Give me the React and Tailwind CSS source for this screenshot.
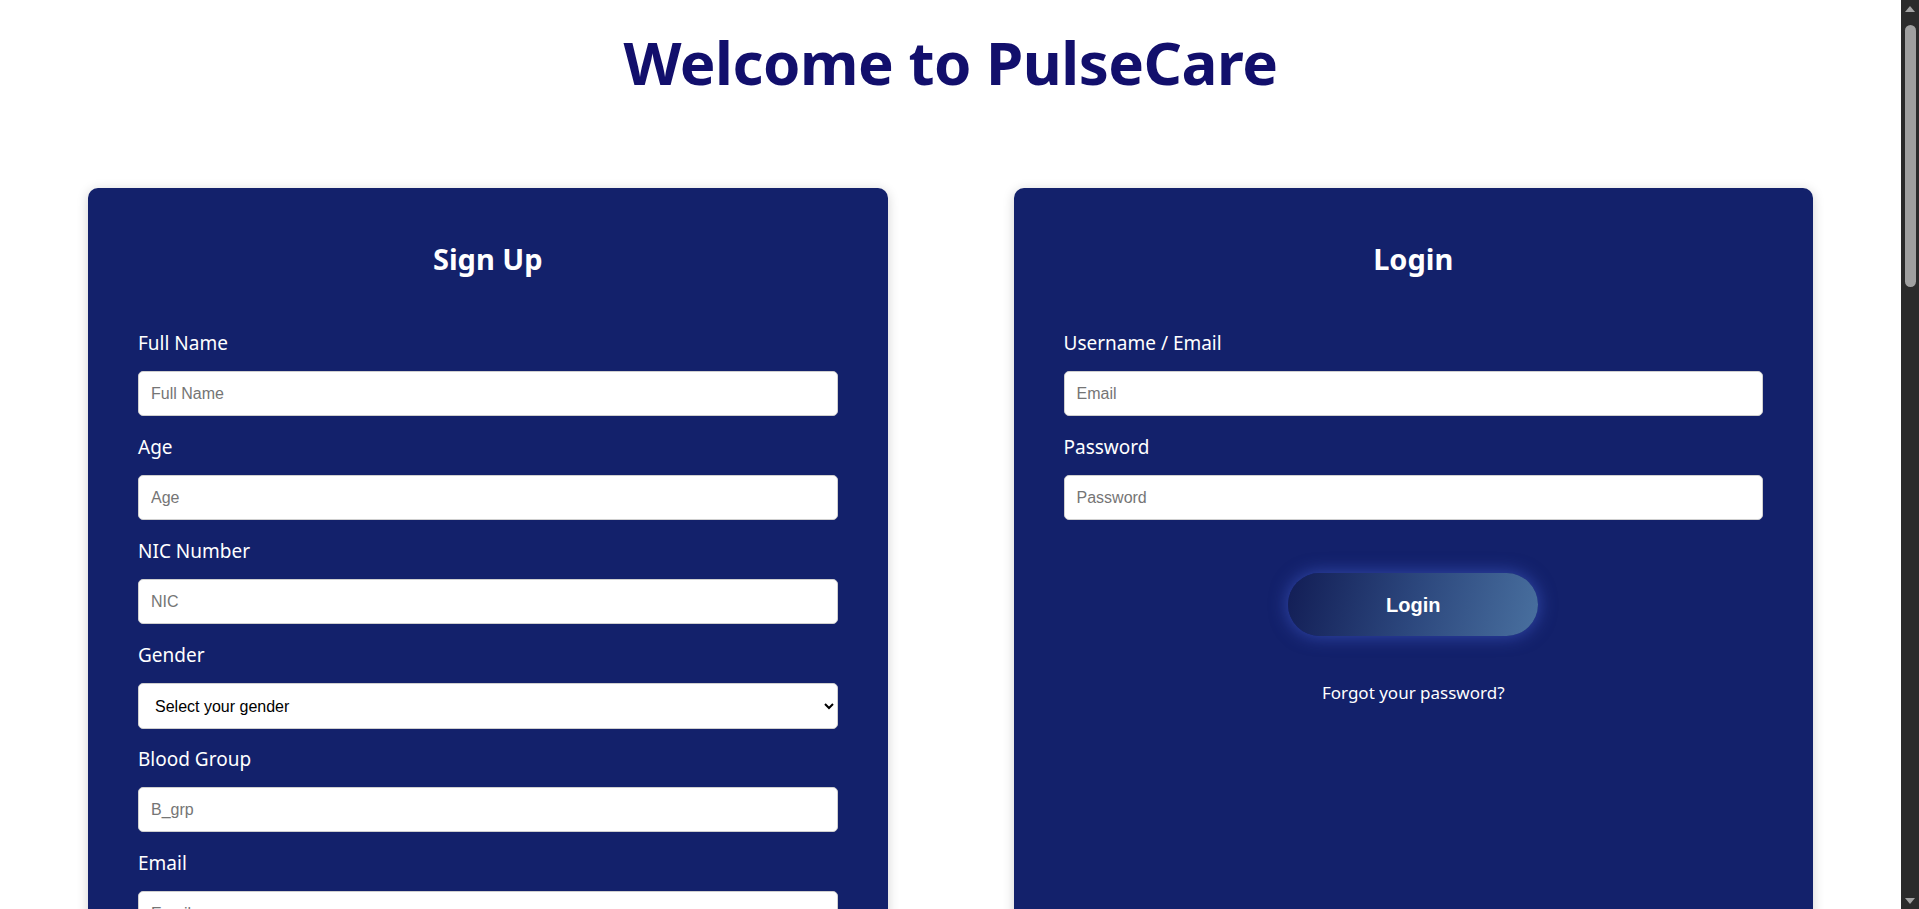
import React from 'react';

const labelCls = "block text-[19px] leading-[24px] text-white mb-[16px] font-['Noto_Sans',sans-serif]";
const inputCls =
  "block w-full h-[45px] rounded-[5px] border border-[#cfcfcf] bg-white px-3 text-base text-black placeholder:text-[#757575] font-['Liberation_Sans',Arial,sans-serif] outline-none mb-[19px]";
const btnCls =
  "h-[63px] w-[250px] rounded-full bg-[linear-gradient(105deg,#121d55,#2c477d_50%,#49709f)] text-[20px] font-bold text-white shadow-[0_0_18px_rgba(80,110,230,0.55)] font-['Liberation_Sans',Arial,sans-serif]";

const Field = ({ label, placeholder, type = 'text' }) => (
  <div>
    <label className={labelCls}>{label}</label>
    <input type={type} placeholder={placeholder} className={inputCls} />
  </div>
);

const Card = ({ title, children }) => (
  <div className="rounded-[10px] bg-[#13216b] px-[50px] pt-[53px] pb-[50px] shadow-[0_2px_12px_rgba(0,0,0,0.18)]">
    <h2 className="text-center text-[29px] leading-[36px] font-bold text-white mb-[54px] font-['Noto_Sans',sans-serif]">
      {title}
    </h2>
    {children}
  </div>
);

// page scrollbar as it shows in the screenshot
const Scrollbar = () => (
  <div className="w-[18px] shrink-0 bg-[#2b2b2b] flex flex-col items-center">
    <div className="mt-[6px] w-0 h-0 border-l-[5px] border-r-[5px] border-b-[6px] border-l-transparent border-r-transparent border-b-[#a3a3a3]" />
    <div className="mt-[13px] w-[11px] h-[262px] rounded-full bg-[#a0a0a0]" />
    <div className="flex-1" />
    <div className="mb-[5px] w-0 h-0 border-l-[5px] border-r-[5px] border-t-[6px] border-l-transparent border-r-transparent border-t-[#a3a3a3]" />
  </div>
);

export default function App() {
  return (
    <div className="flex h-[909px] overflow-hidden bg-white">
      <div className="flex-1 overflow-y-auto [scrollbar-width:none]">
        <h1 className="pt-[22px] text-center text-[60px] leading-[80px] font-bold text-[#120f6c] font-['Noto_Sans',sans-serif] tracking-[-0.5px]">
          Welcome to PulseCare
        </h1>

        <div className="grid grid-cols-2 gap-[126px] px-[88px] pt-[86px] pb-[60px]">
          <Card title="Sign Up">
            <Field label="Full Name" placeholder="Full Name" />
            <Field label="Age" placeholder="Age" type="number" />
            <Field label="NIC Number" placeholder="NIC" />
            <div>
              <label className={labelCls}>Gender</label>
              <select
                defaultValue=""
                className="block w-full h-[46px] rounded-[5px] border border-[#cfcfcf] bg-white px-3 text-base text-black font-['Liberation_Sans',Arial,sans-serif] mb-[18px]"
              >
                <option value="" disabled>Select your gender</option>
                <option>Male</option>
                <option>Female</option>
              </select>
            </div>
            <Field label="Blood Group" placeholder="B_grp" />
            <Field label="Email" placeholder="Email" type="email" />
            <Field label="Contact Number" placeholder="Contact Number" />
            <Field label="Address" placeholder="Address" />
            <Field label="Password" placeholder="Password" type="password" />
            <Field label="Confirm Password" placeholder="Confirm Password" type="password" />
            <div className="flex justify-center mt-[53px]">
              <button className={btnCls}>Sign Up</button>
            </div>
          </Card>

          <Card title="Login">
            <Field label="Username / Email" placeholder="Email" />
            <Field label="Password" placeholder="Password" type="password" />
            <div className="flex justify-center mt-[53px]">
              <button className={btnCls}>Login</button>
            </div>
            <p className="mt-[45px] text-center text-[17px] leading-[24px] text-white font-['Noto_Sans',sans-serif]">
              Forgot your password?
            </p>
          </Card>
        </div>
      </div>
      <Scrollbar />
    </div>
  );
}
